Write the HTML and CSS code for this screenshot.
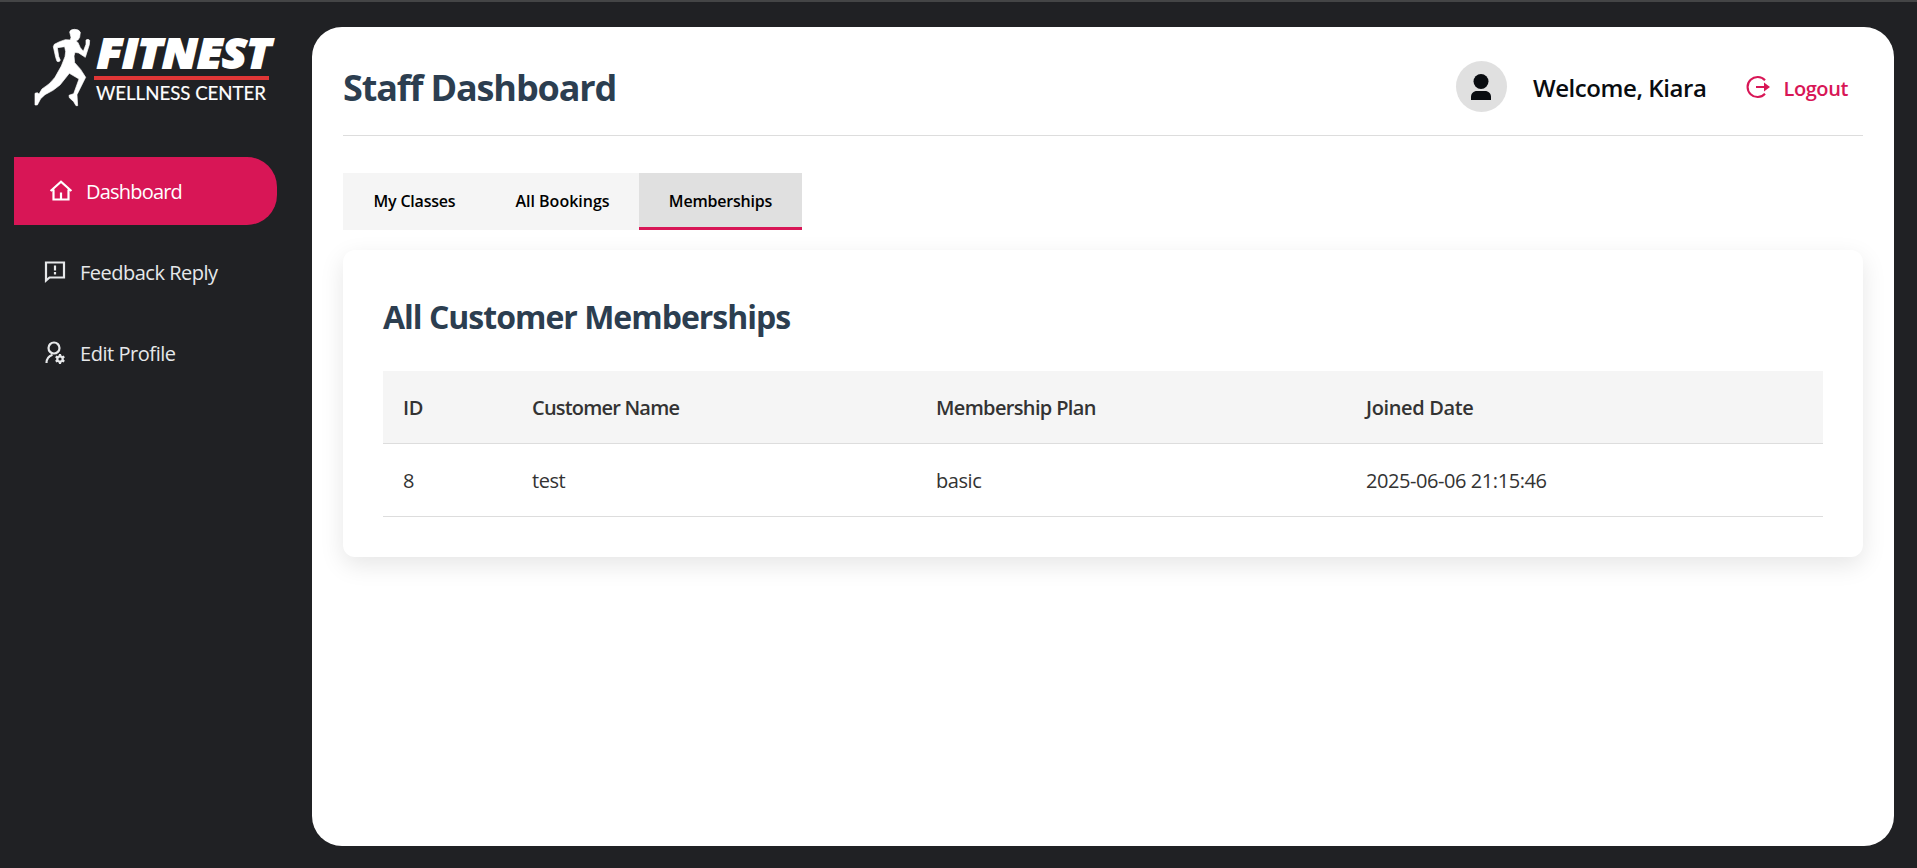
FILE: index.html
```html
<!DOCTYPE html>
<html lang="en">
<head>
<meta charset="utf-8">
<title>Staff Dashboard</title>
<link rel="stylesheet" href="styles.css">
</head>
<body>
<div class="app">
  <aside class="sidebar">
    <svg class="logo" viewBox="0 0 250 90" width="250" height="90" role="img" aria-label="Fitnest Wellness Center">
      <g transform="translate(-4 -7) scale(.3333)" fill="#fff" stroke="#fff" stroke-width="2" stroke-linejoin="round">
        <path d="M119 36Q121 28 133 28Q148 28 151 37L149 52Q146 61 138 62L144 68L151 83L160 94L168 73L168 60L174 58L179 61L178 74L166 112L146 99L135 97L132 108L134 128Q153 146 167 172L141 224L143 257L138 257L131 245L118 233L117 226L131 221L147 177L118 160L90 195Q70 213 45 224L32 236L22 255L15 255L15 220L22 218L27 222L36 207Q60 193 75 172L94 138L105 110L107 95L104 80L82 83L86 109L91 121L87 125L81 124L77 112L70 80L73 73Q88 64 106 59L121 60L123 52Z"/>
      </g>
      <text class="logo-name" x="63" y="41" textLength="174" lengthAdjust="spacingAndGlyphs">FITNEST</text>
      <rect x="60" y="49" width="175" height="4" fill="#e03636"/>
      <text class="logo-sub" x="62" y="72.500" textLength="170" lengthAdjust="spacingAndGlyphs">WELLNESS CENTER</text>
    </svg>
    <nav class="nav">
      <a class="nav-item active"><svg width="24" height="24" viewBox="0 0 24 24" fill="none" stroke="currentColor" stroke-width="2.200"><path d="M1.600 12 12 2.700l10.400 9.300M4.500 10.500V20.500h15V10.500M12 20.500v-7"/></svg><span class="t-dash">Dashboard</span></a>
      <a class="nav-item"><svg width="24" height="24" viewBox="0 0 24 24" fill="none" stroke="currentColor" stroke-width="2.200"><path d="M3 2.500h18v15H6.500L3 20.500zM12 5.500v5M12 12v2.500"/></svg><span class="t-feed">Feedback Reply</span></a>
      <a class="nav-item"><svg width="24" height="24" viewBox="0 0 24 24" fill="none" stroke="currentColor" stroke-width="2.200"><circle cx="11" cy="7" r="5.500"/><path d="M3.500 22c0-4 2.200-7 6-8.300"/><circle cx="17" cy="18" r="2.700"/><path d="M17 13v2.500M17 20.500V23M12.700 15.500l2.100 1.200M19.200 19.300l2.100 1.200M12.700 20.500l2.100-1.200M19.200 16.700l2.100-1.200"/></svg><span class="t-edit">Edit Profile</span></a>
    </nav>
  </aside>
  <main class="panel">
    <header class="header">
      <h1>Staff Dashboard</h1>
      <div class="user">
        <div class="avatar"><svg width="24" height="30" viewBox="0 0 24 30" fill="#090c10"><circle cx="12" cy="9.500" r="7.500"/><path d="M2 28v-3c0-3.500 2.500-6 6-6h8c3.500 0 6 2.500 6 6v3z"/></svg></div>
        <span class="welcome">Welcome, Kiara</span>
        <a class="logout"><svg width="26" height="24" viewBox="0 0 26 24" fill="none" stroke="currentColor" stroke-width="2.100"><path d="M20 5.300A10 10 0 1 0 20 18.700M11 12h9"/><path d="M19 7.500 25 12 19 16.500z" fill="currentColor" stroke="none"/></svg><span>Logout</span></a>
      </div>
    </header>
    <div class="tabs">
      <button class="tab"><span>My Classes</span></button>
      <button class="tab"><span>All Bookings</span></button>
      <button class="tab selected"><span>Memberships</span></button>
    </div>
    <section class="card">
      <h2>All Customer Memberships</h2>
      <table>
        <colgroup><col class="c1"><col class="c2"><col class="c3"><col class="c4"></colgroup>
        <thead><tr><th>ID</th><th class="t-name">Customer Name</th><th class="t-plan">Membership Plan</th><th>Joined Date</th></tr></thead>
        <tbody><tr><td>8</td><td>test</td><td>basic</td><td>2025-06-06 21:15:46</td></tr></tbody>
      </table>
    </section>
  </main>
</div>
</body>
</html>
```
FILE: styles.css
```css
* { box-sizing: border-box; }
body { margin: 0; background: #202124; font-family: "Open Sans", "Noto Sans", sans-serif; }
.app { display: flex; height: 868px; padding: 25px 23px 22px 0; border-top: 2px solid #444546; }
.sidebar { width: 312px; flex: none; }
.logo { display: block; margin-left: 34px; overflow: visible; }
.logo-name { font: italic 800 41px "Open Sans", sans-serif; fill: #fff; stroke: #fff; stroke-width: 1.8; }
.logo-sub { font: 400 20px Lato, sans-serif; fill: #fff; stroke: #fff; stroke-width: .2; }
.nav { display: flex; flex-direction: column; gap: 13px; margin: 40px 35px 0 14px; }
.nav-item { display: flex; align-items: center; gap: 13px; height: 68px; padding-left: 29px; color: #e6e8ea; font-size: 20px; white-space: nowrap; }
.nav-item svg { flex: none; }
.nav-item.active { padding-left: 35px; background: #d81656; color: #fff; border-radius: 0 30px 30px 0; }
.t-dash { letter-spacing: -.8px; }
.t-feed { letter-spacing: -.5px; }
.t-edit { letter-spacing: -.45px; }
.panel { flex: 1; background: #fff; border-radius: 30px; padding: 0 31px; }
.header { display: flex; justify-content: space-between; align-items: center; height: 109px; padding-top: 11px; border-bottom: 1px solid #ddd; }
h1 { margin: 3px 0 0; font-size: 36px; line-height: 48px; color: #2c3e50; letter-spacing: -1.15px; }
.user { display: flex; align-items: center; padding-right: 15px; }
.avatar { display: grid; place-items: center; width: 51px; height: 51px; border-radius: 50%; background: #e0e0e0; }
.welcome { margin: 2px 39px 0 26px; font-size: 24px; font-weight: 600; color: #090c10; letter-spacing: -.43px; }
.logout { display: flex; gap: 12px; align-items: center; color: #d81656; font-size: 20px; font-weight: 600; letter-spacing: -.4px; }
.logout span { padding-top: 3px; }
.tabs { display: flex; margin-top: 37px; }
.tab { width: 143px; height: 57px; padding: 2px 0 0; border: 0; border-bottom: 3px solid #f5f5f5; background: #f5f5f5; color: #000; font: 600 16px "Open Sans", sans-serif; letter-spacing: -.2px; }
.tab:nth-child(2) { width: 153px; letter-spacing: 0; }
.tab.selected { width: 163px; background: #e0e0e0; border-color: #d81656; }
.card { height: 307px; margin-top: 20px; padding: 45px 40px 40px; border-radius: 12px; background: #fff; box-shadow: 0 8px 24px rgba(0,0,0,.1); }
h2 { margin: 0 0 33px; font-size: 32px; line-height: 43px; color: #2c3e50; letter-spacing: -1px; }
table { width: 100%; table-layout: fixed; border-collapse: separate; border-spacing: 0; font-size: 20px; color: #333; }
th, td { height: 73px; padding: 0 20px; text-align: left; border-bottom: 1px solid #ddd; }
th { background: #f5f5f5; font-weight: 600; letter-spacing: -.35px; }
td { letter-spacing: -.43px; }
.t-name { letter-spacing: -.8px; }
.t-plan { letter-spacing: -.65px; }
.c1 { width: 129px; } .c2 { width: 404px; } .c3 { width: 430px; }
```
